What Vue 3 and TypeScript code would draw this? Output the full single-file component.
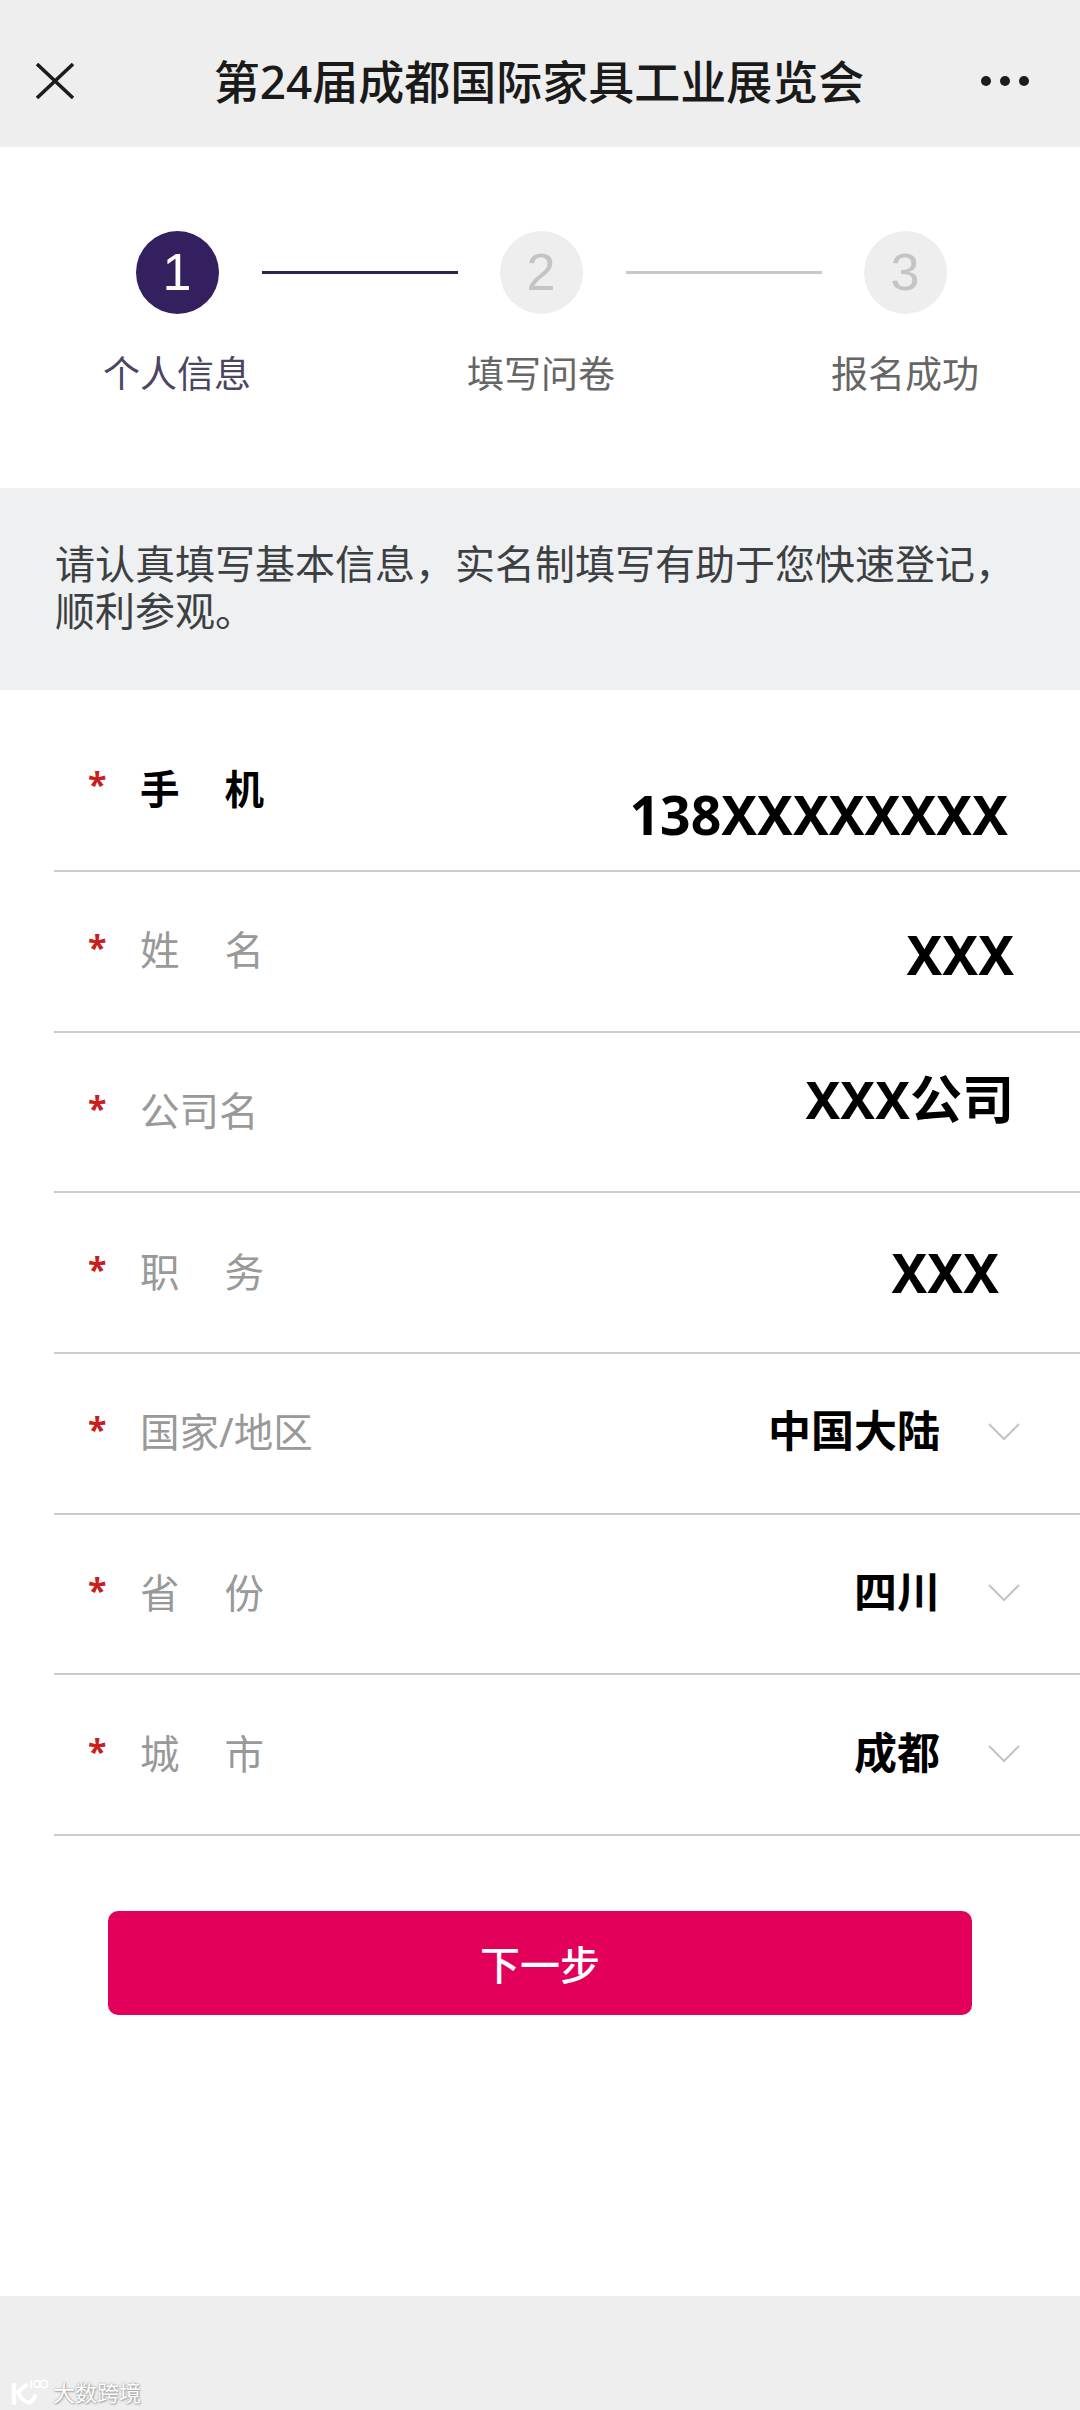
<script setup lang="ts">
interface Step { num: number; label: string; active?: boolean }
interface Row {
  name: string
  value: string
  select?: boolean
  active?: boolean
  wide?: boolean
  head: string
  tail: string
}

const steps: Step[] = [
  { num: 1, label: '个人信息', active: true },
  { num: 2, label: '填写问卷' },
  { num: 3, label: '报名成功' },
]

// head/tail name a class that nudges the label and the value inside their row
const rows: Row[] = [
  { name: '手机', value: '138XXXXXXXX', active: true, head: 'first', tail: 'end-phone' },
  { name: '姓名', value: 'XXX', head: 'plain', tail: 'end-name' },
  { name: '公司名', value: 'XXX公司', wide: true, head: 'plain', tail: 'end-company' },
  { name: '职务', value: 'XXX', head: 'plain', tail: 'end-job' },
  { name: '国家/地区', value: '中国大陆', select: true, wide: true, head: 'plain', tail: 'end-select' },
  { name: '省份', value: '四川', select: true, head: 'plain', tail: 'end-select' },
  { name: '城市', value: '成都', select: true, head: 'plain', tail: 'end-select' },
]
</script>

<template>
  <div class="page">
    <header class="topbar">
      <svg class="close" width="38" height="36" viewBox="0 0 38 36" fill="none" stroke="#1c1c1c" stroke-width="3.5">
        <path d="M1 1 37 35M37 1 1 35" />
      </svg>
      <h1 class="title">第24届成都国际家具工业展览会</h1>
      <svg class="more" width="50" height="12" viewBox="0 0 50 12" fill="#1c1c1c">
        <circle cx="6" cy="6" r="5" />
        <circle cx="25" cy="6" r="5" />
        <circle cx="44" cy="6" r="5" />
      </svg>
    </header>

    <section class="steps">
      <template v-for="(step, i) in steps" :key="step.num">
        <div class="step" :class="{ on: step.active }">
          <span class="dot">{{ step.num }}</span>
          <span class="step-label">{{ step.label }}</span>
        </div>
        <span v-if="i < steps.length - 1" class="link" :class="{ on: step.active }"></span>
      </template>
    </section>

    <p class="notice">请认真填写基本信息，实名制填写有助于您快速登记，顺利参观。</p>

    <form class="form" @submit.prevent>
      <div v-for="row in rows" :key="row.name" class="row" :class="row.head">
        <span class="star">*</span>
        <span class="name" :class="{ active: row.active, wide: row.wide }">{{ row.name }}</span>
        <span class="value" :class="[row.tail, { small: row.select }]">{{ row.value }}</span>
        <svg v-if="row.select" class="chevron" width="32" height="18" viewBox="0 0 32 18" fill="none" stroke="#c4c4c4" stroke-width="2">
          <path d="M1 1 16 16 31 1" />
        </svg>
      </div>
      <button class="next" type="button">下一步</button>
    </form>

    <footer class="foot">
      <div class="mark">
        <svg width="38" height="28" viewBox="0 0 38 28" fill="none" stroke="#fff" stroke-linecap="round">
          <path d="M3 7v18" stroke-width="4.5" />
          <path d="M15 7 7 14c3 7 7 11 12 10 3-1 4-3 5-6" stroke-width="4" />
          <path d="M20 3v7" stroke-width="1.6" />
          <circle cx="26" cy="6" r="3.4" stroke-width="1.6" />
          <circle cx="33" cy="6" r="3.8" stroke-width="1.6" />
        </svg>
        <span class="mark-text">大数跨境</span>
      </div>
    </footer>
  </div>
</template>

<style>
html,
body {
  margin: 0;
  background: #fff;
}
</style>

<style scoped>
.page {
  width: 1080px;
  height: 2410px;
  display: flex;
  flex-direction: column;
  overflow: hidden;
  background: #fff;
  font-family: "Noto Sans", "Noto Sans CJK SC", sans-serif;
}

.topbar {
  height: 147px;
  flex: none;
  box-sizing: border-box;
  padding: 14px 50px 0 36px;
  display: flex;
  align-items: center;
  justify-content: space-between;
  background: #eeeeee;
}
.title {
  margin: -4px 0 0 24px;
  font-size: 46px;
  font-weight: 500;
  color: #1a1a1a;
  white-space: nowrap;
}

.steps {
  height: 341px;
  flex: none;
  box-sizing: border-box;
  padding: 84px 0 0 127px;
  display: flex;
  align-items: flex-start;
}
.step {
  width: 100px;
  display: flex;
  flex-direction: column;
  align-items: center;
}
.dot {
  width: 83px;
  height: 83px;
  border-radius: 50%;
  background: #eeeeee;
  color: #c4c4c4;
  font-family: "Liberation Sans", sans-serif;
  font-size: 52px;
  line-height: 83px;
  text-align: center;
}
.step.on .dot {
  background: #35205f;
  color: #fff;
}
.step-label {
  margin-top: 35px;
  font-size: 37px;
  line-height: 50px;
  color: #666;
  white-space: nowrap;
}
.step.on .step-label {
  color: #4b4563;
}
.link {
  width: 196px;
  height: 3px;
  margin: 40px 33px 0 35px;
  flex: none;
  background: #c8c8c8;
}
.link.on {
  background: #2b2550;
}

.notice {
  margin: 0;
  height: 202px;
  flex: none;
  box-sizing: border-box;
  padding: 52px 40px 0 55px;
  background: #eff0f1;
  font-size: 40px;
  line-height: 47px;
  color: #3c4043;
}

.form {
  flex: 1;
  display: flex;
  flex-direction: column;
}
.row {
  height: 160.7px;
  box-sizing: border-box;
  margin-left: 54px;
  padding: 0 62px 0 34px;
  display: flex;
  align-items: center;
  border-bottom: 2px solid #cccccc;
}
.row.first {
  height: 182px;
  padding-top: 20px;
}
.star {
  width: 52px;
  flex: none;
  color: #c81e1e;
  font-size: 34px;
  font-weight: 700;
  line-height: 1;
  margin-top: -8px;
}
.row.first .star {
  margin-top: -12px;
}
.name {
  width: 124px;
  flex: none;
  font-size: 39.5px;
  line-height: 50px;
  margin-top: -2px;
  color: #999;
  text-align-last: justify;
  white-space: nowrap;
}
.name.wide {
  width: auto;
  text-align-last: auto;
}
.name.active {
  color: #000;
  font-weight: 700;
}
.value {
  margin-left: auto;
  color: #000;
  font-size: 53.5px;
  font-weight: 700;
  line-height: 70px;
  white-space: nowrap;
}
.value.small {
  font-size: 43px;
  margin-top: -4px;
}
.end-phone {
  margin-top: 50px;
  margin-right: 10px;
}
.end-name {
  margin-top: 7px;
  margin-right: 4px;
}
.end-company {
  font-size: 52px;
  margin-top: -26px;
  margin-right: 4px;
}
.end-job {
  margin-top: 1px;
  margin-right: 19px;
}
.chevron {
  flex: none;
  margin: -2px -2px 0 48px;
}

.next {
  width: 864px;
  height: 104px;
  margin: 75px 0 0 108px;
  flex: none;
  border: 0;
  border-radius: 10px;
  background: #e2005a;
  color: #fff;
  font-family: inherit;
  font-size: 40px;
  font-weight: 500;
}

.foot {
  height: 114px;
  flex: none;
  box-sizing: border-box;
  padding: 82px 0 0 11px;
  background: #eeeeee;
}
.mark {
  display: flex;
  align-items: center;
  gap: 4px;
}
.mark-text {
  font-size: 22px;
  line-height: 28px;
  color: #fff;
  text-shadow: 0 0 2px #8f8f8f, 1px 1px 2px #a8a8a8;
}
</style>
